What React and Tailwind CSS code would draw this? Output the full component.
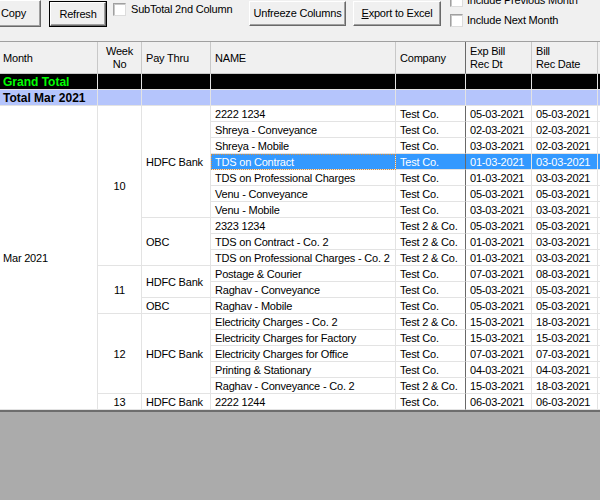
import React from 'react'

const rows = [
  { name: '2222 1234', co: 'Test Co.', exp: '05-03-2021', bill: '05-03-2021' },
  { name: 'Shreya - Conveyance', co: 'Test Co.', exp: '02-03-2021', bill: '02-03-2021' },
  { name: 'Shreya - Mobile', co: 'Test Co.', exp: '03-03-2021', bill: '02-03-2021' },
  { name: 'TDS on Contract', co: 'Test Co.', exp: '01-03-2021', bill: '03-03-2021' },
  { name: 'TDS on Professional Charges', co: 'Test Co.', exp: '01-03-2021', bill: '03-03-2021' },
  { name: 'Venu - Conveyance', co: 'Test Co.', exp: '05-03-2021', bill: '05-03-2021' },
  { name: 'Venu - Mobile', co: 'Test Co.', exp: '03-03-2021', bill: '03-03-2021' },
  { name: '2323 1234', co: 'Test 2 & Co.', exp: '05-03-2021', bill: '05-03-2021' },
  { name: 'TDS on Contract - Co. 2', co: 'Test 2 & Co.', exp: '01-03-2021', bill: '03-03-2021' },
  { name: 'TDS on Professional Charges - Co. 2', co: 'Test 2 & Co.', exp: '01-03-2021', bill: '03-03-2021' },
  { name: 'Postage & Courier', co: 'Test Co.', exp: '07-03-2021', bill: '08-03-2021' },
  { name: 'Raghav - Conveyance', co: 'Test Co.', exp: '05-03-2021', bill: '05-03-2021' },
  { name: 'Raghav - Mobile', co: 'Test Co.', exp: '05-03-2021', bill: '05-03-2021' },
  { name: 'Electricity Charges - Co. 2', co: 'Test 2 & Co.', exp: '15-03-2021', bill: '18-03-2021' },
  { name: 'Electricity Charges for Factory', co: 'Test Co.', exp: '15-03-2021', bill: '15-03-2021' },
  { name: 'Electricity Charges for Office', co: 'Test Co.', exp: '07-03-2021', bill: '07-03-2021' },
  { name: 'Printing & Stationary', co: 'Test Co.', exp: '04-03-2021', bill: '04-03-2021' },
  { name: 'Raghav - Conveyance - Co. 2', co: 'Test 2 & Co.', exp: '15-03-2021', bill: '18-03-2021' },
  { name: '2222 1244', co: 'Test Co.', exp: '06-03-2021', bill: '06-03-2021' },
]

// merged cells: row index where the group starts -> label + span
const weeks = { 0: ['10', 10], 10: ['11', 3], 13: ['12', 5], 18: ['13', 1] }
const pays = {
  0: ['HDFC Bank', 7],
  7: ['OBC', 3],
  10: ['HDFC Bank', 2],
  12: ['OBC', 1],
  13: ['HDFC Bank', 5],
  18: ['HDFC Bank', 1],
}
const spans = {
  1: 'row-span-1',
  2: 'row-span-2',
  3: 'row-span-3',
  5: 'row-span-5',
  7: 'row-span-7',
  10: 'row-span-10',
  19: 'row-span-19',
}

const SELECTED = 3
const line = 'border-r border-b border-[#e3e3e3] pt-px'

const Button = ({ children, className = '' }) => (
  <button
    className={`flex items-center justify-center bg-[#f0f0f0] border border-t-white border-l-white border-r-[#696969] border-b-[#696969] text-black ${className}`}
  >
    {children}
  </button>
)

const Check = () => (
  <span className="w-[13px] h-[13px] shrink-0 bg-white border border-t-[#a0a0a0] border-l-[#a0a0a0] border-r-[#dcdcdc] border-b-[#dcdcdc] shadow-[inset_1px_1px_0_#c8c8c8]" />
)

const HeadCell = ({ children, className = '' }) => (
  <div
    className={`bg-[#f0f0f0] border-r border-b border-[#c8c8c8] pt-px flex items-center leading-[13px] ${className}`}
  >
    {children}
  </div>
)

export default function App() {
  return (
    <div className="w-[600px] h-[500px] flex flex-col bg-[#ababab] overflow-hidden font-['Liberation_Sans',Arial,sans-serif] text-[11px] tracking-[-0.2px] text-black select-none">
      {/* Toolbar */}
      <div className="h-[42px] shrink-0 flex items-start bg-[#f0f0f0] border-b border-[#a0a0a0] overflow-hidden">
        <Button className="ml-[-14px] w-[55px] h-[27px] shadow-[inset_-1px_-1px_0_#a0a0a0]">Copy</Button>
        <Button className="ml-[9px] mt-[2px] w-[56px] h-[24px] shadow-[0_0_0_1px_#000,inset_-1px_-1px_0_#a0a0a0]">
          Refresh
        </Button>
        <label className="ml-[7px] mt-[-1px] w-[136px] h-[20px] flex items-center gap-[5px] whitespace-nowrap">
          <Check />
          <span>SubTotal 2nd Column</span>
        </label>
        <Button className="mt-[1px] w-[97px] h-[25px] shadow-[inset_-1px_-1px_0_#a0a0a0]">Unfreeze Columns</Button>
        <Button className="ml-[7px] mt-[1px] w-[88px] h-[25px] shadow-[inset_-1px_-1px_0_#a0a0a0]">
          <span className="underline">E</span>xport to Excel
        </Button>
        <div className="ml-[9px] mt-[-10px] flex flex-col">
          <label className="h-[20px] flex items-center gap-[4px] whitespace-nowrap">
            <Check />
            <span>Include Previous Month</span>
          </label>
          <label className="h-[20px] flex items-center gap-[4px] whitespace-nowrap">
            <Check />
            <span>Include Next Month</span>
          </label>
        </div>
      </div>

      {/* Grid */}
      <div className="shrink-0 bg-white border-b-2 border-[#6d6d6d] grid grid-cols-[98px_44px_69px_185px_70px_66px_66px_2px] grid-rows-[32px] auto-rows-[16px]">
        <HeadCell className="pl-[3px]">Month</HeadCell>
        <HeadCell className="justify-center text-center">
          Week
          <br />
          No
        </HeadCell>
        <HeadCell className="pl-[4px]">Pay Thru</HeadCell>
        <HeadCell className="pl-[4px]">NAME</HeadCell>
        <HeadCell className="pl-[4px] border-r-[#696969]">Company</HeadCell>
        <HeadCell className="pl-[4px]">
          Exp Bill
          <br />
          Rec Dt
        </HeadCell>
        <HeadCell className="pl-[4px]">
          Bill
          <br />
          Rec Date
        </HeadCell>
        <div className="bg-[#f0f0f0] border-b border-[#c8c8c8]" />

        {/* Grand total */}
        <div className={`bg-black ${line} pl-[3px] flex items-center text-[12px] font-bold tracking-normal text-[#00ff00] whitespace-nowrap`}>
          Grand Total
        </div>
        <div className={`bg-black ${line}`} />
        <div className={`bg-black ${line}`} />
        <div className={`bg-black ${line}`} />
        <div className={`bg-black ${line}`} />
        <div className={`bg-black ${line}`} />
        <div className={`bg-black ${line}`} />
        <div className="bg-black border-b border-[#e3e3e3]" />

        {/* Month total */}
        <div className={`bg-[#b5c5fc] ${line} pl-[3px] flex items-center text-[12px] font-bold tracking-normal whitespace-nowrap`}>
          Total Mar 2021
        </div>
        <div className={`bg-[#b5c5fc] ${line}`} />
        <div className={`bg-[#b5c5fc] ${line}`} />
        <div className={`bg-[#b5c5fc] ${line}`} />
        <div className={`bg-[#b5c5fc] ${line}`} />
        <div className={`bg-[#b5c5fc] ${line}`} />
        <div className={`bg-[#b5c5fc] ${line}`} />
        <div className="bg-[#b5c5fc] border-b border-[#e3e3e3]" />

        {rows.map((r, i) => {
          const sel = i === SELECTED
          const cell = sel ? 'bg-[#3399ff] text-white' : 'bg-white'
          return (
            <React.Fragment key={i}>
              {i === 0 && (
                <div className={`col-start-1 ${spans[19]} ${line} flex items-center pl-[3px]`}>Mar 2021</div>
              )}
              {weeks[i] && (
                <div className={`col-start-2 ${spans[weeks[i][1]]} ${line} flex items-center justify-center`}>
                  {weeks[i][0]}
                </div>
              )}
              {pays[i] && (
                <div className={`col-start-3 ${spans[pays[i][1]]} ${line} flex items-center pl-[4px] whitespace-nowrap`}>
                  {pays[i][0]}
                </div>
              )}
              <div
                className={`col-start-4 ${line} ${cell} flex items-center pl-[4px] whitespace-nowrap overflow-hidden ${
                  sel ? 'outline outline-dotted outline-[#d9903f] -outline-offset-1' : ''
                }`}
              >
                {r.name}
              </div>
              <div className={`col-start-5 ${line} border-r-[#696969] ${cell} flex items-center pl-[4px] whitespace-nowrap`}>
                {r.co}
              </div>
              <div className={`col-start-6 ${line} ${cell} flex items-center pl-[4px]`}>{r.exp}</div>
              <div className={`col-start-7 ${line} ${cell} flex items-center pl-[4px]`}>{r.bill}</div>
              <div className={`col-start-8 border-b border-[#e3e3e3] ${cell}`} />
            </React.Fragment>
          )
        })}
      </div>

      {/* empty area below the grid */}
      <div className="flex-1 bg-[#ababab]" />
    </div>
  )
}
